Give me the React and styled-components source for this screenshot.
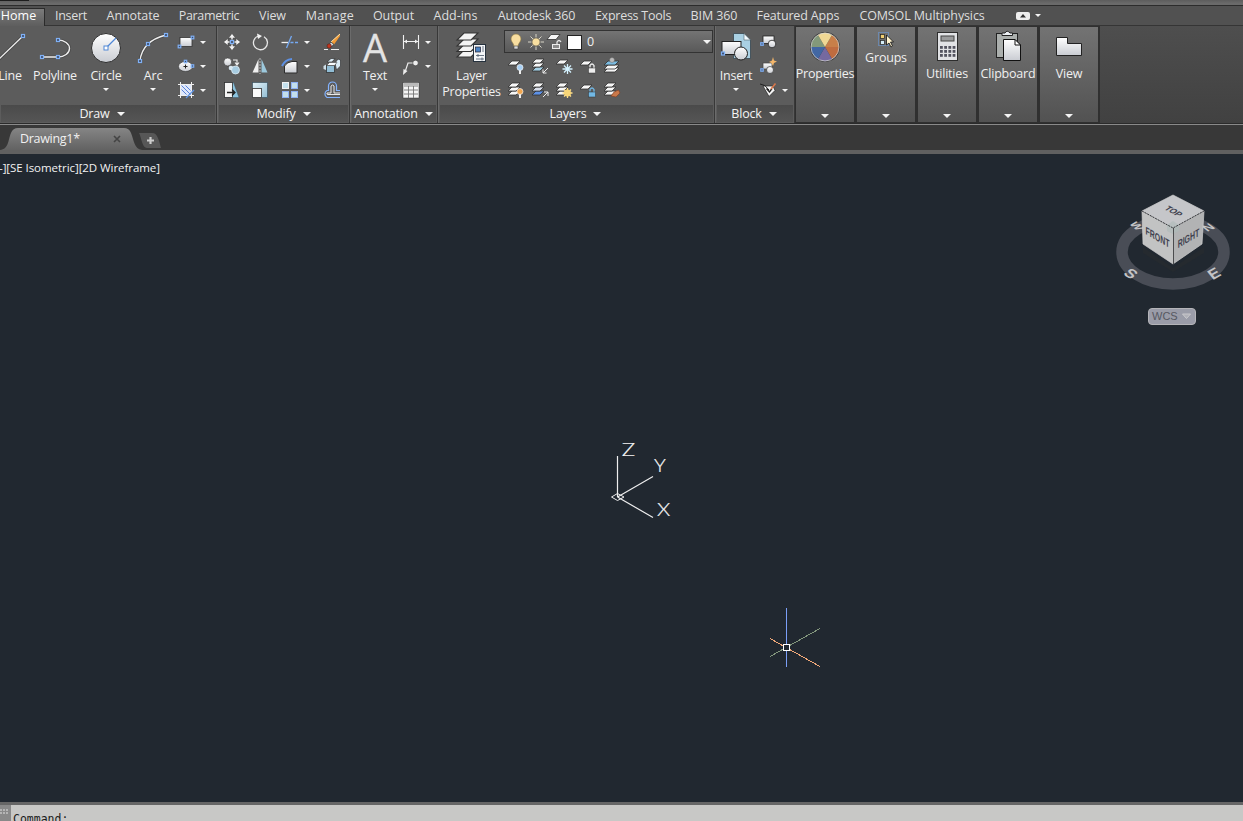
import React from "react";
import styled, { createGlobalStyle, css } from "styled-components";

const Global = createGlobalStyle`
  html, body { margin: 0; padding: 0; overflow: hidden; background: #212830; }
  * { box-sizing: border-box; }
`;

const Window = styled.div`
  width: 1243px;
  height: 821px;
  overflow: hidden;
  display: flex;
  flex-direction: column;
  background: #212830;
  color: #f0f0f0;
  font: 12.5px/16px "Open Sans", "Noto Sans", sans-serif;
  white-space: nowrap;
`;

const TitleStrip = styled.div`
  height: 6px;
  flex: none;
  background: linear-gradient(#5d5d5d, #6a6a6a 70%);
  border-bottom: 1px solid #2c2c2c;
  &::before { content: ""; display: block; width: 29px; height: 1px; background: #1d1d1d; }
`;

const TabBar = styled.nav`
  height: 20px;
  flex: none;
  display: flex;
  background: #515151;
  border-bottom: 1px solid #353535;
`;

const Tab = styled.div`
  width: ${(p) => p.$w}px;
  height: ${(p) => (p.$active ? 18 : 19)}px;
  margin-top: ${(p) => (p.$active ? 2 : 0)}px;
  padding-top: ${(p) => (p.$active ? 0 : 2)}px;
  display: flex;
  justify-content: center;
  color: #dedede;
  letter-spacing: ${(p) => p.$ls || 0}px;
  ${(p) => p.$active && css`
    background: linear-gradient(#7b7b7b, #5e5e5e);
    border-top: 1px solid #2b2b2b;
    border-right: 1px solid #2b2b2b;
    padding-right: 7px;
    color: #fff;
    line-height: 14px;
  `}
`;

const TabTools = styled.div`
  display: flex;
  align-items: center;
  gap: 5px;
  padding-left: 21px;
`;

const Ribbon = styled.div`
  height: 98px;
  flex: none;
  display: flex;
  background: linear-gradient(#4e4e4e, #414141);
  border-bottom: 1px solid #2b2b2b;
`;

const Panel = styled.section`
  width: ${(p) => p.$w}px;
  flex: none;
  display: flex;
  flex-direction: column;
  background: #5c5c5c;
  border-left: ${(p) => (p.$first ? 0 : 1)}px solid #6b6b6b;
  border-right: 1px solid #383838;
`;

const PanelBody = styled.div`
  height: 79px;
  display: flex;
`;

const PanelTitle = styled.div`
  height: 17px;
  margin: 0 1px;
  display: flex;
  align-items: center;
  justify-content: center;
  gap: 7px;
  padding-right: ${(p) => p.$shift || 0}px;
  background: linear-gradient(#4a4a4a, #555);
  color: #f4f4f4;
  letter-spacing: -0.15px;
`;

const Arrow = styled.i`
  flex: none;
  width: 0;
  height: 0;
  border: ${(p) => (p.$s || 3)}px solid transparent;
  border-top: ${(p) => (p.$s || 3)}px solid #f4f4f4;
  border-bottom: 0;
`;

const BigButton = styled.div`
  width: ${(p) => p.$w}px;
  margin-left: ${(p) => p.$ml || 0}px;
  flex: none;
  display: flex;
  flex-direction: column;
  align-items: center;
  padding-top: 5px;
  letter-spacing: -0.2px;
  svg { flex: none; margin-bottom: 3px; }
  i { margin-top: 4px; }
`;

const SmallColumn = styled.div`
  display: flex;
  flex-direction: column;
  padding-top: 4px;
  margin-left: ${(p) => p.$ml || 0}px;
`;

const SmallRow = styled.div`
  height: 24px;
  display: flex;
  align-items: center;
  gap: 5px;
`;

const ModifyGrid = styled.div`
  display: grid;
  grid-template-columns: 28px 30px 42px 18px;
  grid-auto-rows: 24px;
  align-items: center;
  padding: 4px 0 0 5px;
`;

const LayerTools = styled.div`
  display: flex;
  flex-direction: column;
  padding-top: 4px;
`;

const LayerSelect = styled.div`
  width: 209px;
  height: 23px;
  display: flex;
  align-items: center;
  padding: 0 1px 0 2px;
  border: 1px solid #333;
  background: linear-gradient(#747474, #595959);
  i { margin-left: auto; }
`;

const LayerGrid = styled.div`
  display: grid;
  grid-template-columns: repeat(5, 24px);
  grid-auto-rows: 24px;
  align-items: center;
  padding: 1px 0 0 3px;
`;

const Swatch = styled.b`
  width: 15px;
  height: 15px;
  margin: 1px 5px 0 4px;
  background: #fff;
  border: 1px solid #222;
`;

const Collapsed = styled.section`
  width: 61px;
  flex: none;
  height: 97px;
  display: flex;
  flex-direction: column;
  align-items: center;
  padding-top: 3px;
  padding-bottom: 4px;
  background: linear-gradient(#737373, #525252);
  border: 1px solid #303030;
  border-right-width: 2px;
  letter-spacing: -0.2px;
  svg { flex: none; margin-bottom: 2px; }
  i { margin-top: auto; }
`;

const FileTabs = styled.div`
  height: 30px;
  flex: none;
  display: flex;
  align-items: flex-start;
  background: #383838;
  border-top: 1px solid #8a8a8a;
  border-bottom: 4px solid #606060;
`;

const FileTab = styled.div`
  width: 142px;
  height: 22px;
  margin-top: 3px;
  padding: 0 21px 1px 20px;
  display: flex;
  align-items: center;
  justify-content: space-between;
  letter-spacing: -0.3px;
  background: linear-gradient(#858585, #626262);
  clip-path: path("M0 22 C9 21 8 12 11 5 Q13 0 18 0 H124 Q129 0 131 5 C134 12 134 21 142 22 Z");
`;

const NewTab = styled.div`
  width: 22px;
  height: 15px;
  margin: 8px 0 0 -3px;
  display: flex;
  align-items: center;
  justify-content: center;
  background: #575757;
  clip-path: path("M0 0 H13 C19 0 20 8 22 15 H8 C3 15 3 6 0 0 Z");
`;

const Canvas = styled.main`
  height: 648px;
  flex: none;
  position: relative;
  background: #212830;
`;

const ViewLabel = styled.div`
  padding-top: 6px;
  margin-left: -1px;
  font-size: 11.5px;
  font-weight: 500;
  color: #f2f2f2;
  letter-spacing: -0.06px;
`;

const Placed = styled.svg`
  position: absolute;
  left: ${(p) => p.$x}px;
  top: ${(p) => p.$y}px;
`;

const Wcs = styled.div`
  position: absolute;
  left: 1148px;
  top: 154px;
  width: 48px;
  height: 17px;
  display: flex;
  align-items: center;
  justify-content: space-between;
  padding: 0 4px 0 3px;
  border: 1px solid #b4b4b8;
  border-radius: 4px;
  background: #9a9ca8;
  color: #565861;
  font: 11px/15px "Liberation Sans", sans-serif;
`;

const CommandBar = styled.footer`
  height: 19px;
  flex: none;
  display: flex;
  background: #c8c8c6;
  border-top: 3px solid #666;
  color: #1c1c1c;
  font: 11.5px/16px "DejaVu Sans Mono", monospace;
  overflow: hidden;
`;

const Grip = styled.div`
  width: 11px;
  margin-right: 2px;
  background: #898989;
`;

const CommandText = styled.div`
  padding-top: 6px;
`;

/* ---------- icons ---------- */

const Small = ({ children }) => <svg width="18" height="18" viewBox="0 0 18 18" fill="none">{children}</svg>;
const Big = ({ children }) => <svg width="34" height="34" viewBox="0 0 34 34" fill="none">{children}</svg>;

const Node = ({ x, y, s = 3 }) => (
  <rect x={x - s / 2} y={y - s / 2} width={s} height={s} fill="#3d4b66" stroke="#7fb0f5" strokeWidth="1.2" />
);

const HiddenDefs = styled.svg`
  position: absolute;
`;

const Defs = () => (
  <HiddenDefs width="0" height="0">
    <defs>
      <linearGradient id="silver" x1="0" y1="0" x2="0" y2="1"><stop offset="0" stopColor="#fff" /><stop offset="1" stopColor="#c9ccd2" /></linearGradient>
      <linearGradient id="ice" x1="0" y1="0" x2="1" y2="1"><stop offset="0" stopColor="#e3f2f8" /><stop offset="1" stopColor="#93bdd3" /></linearGradient>
    </defs>
  </HiddenDefs>
);

const LineIcon = () => <Big><path d="M4 30 30 5" stroke="#222" strokeWidth="3" opacity=".35" /><path d="M4 30 30 5" stroke="#eee" strokeWidth="1.3" /><Node x={30} y={5} /></Big>;
const PolylineIcon = () => <Big><path d="M4 26H20A11.5 8.5 0 0 0 20 9" stroke="#222" strokeWidth="3" opacity=".3" /><path d="M4 26H20A11.5 8.5 0 0 0 20 9" stroke="#eee" strokeWidth="1.4" /><Node x={4} y={26} /><Node x={20} y={26} /><Node x={20} y={9} /></Big>;
const CircleIcon = () => <Big><circle cx="17" cy="17" r="14.5" fill="url(#silver)" stroke="#2e2e2e" /><path d="M17 17 27 7" stroke="#4f87d6" strokeWidth="1.2" /><rect x="15" y="15" width="4" height="4" fill="#fff" stroke="#4f87d6" /></Big>;
const ArcIcon = () => <Big><path d="M4 30Q6 10 30 4" stroke="#222" strokeWidth="3" opacity=".3" /><path d="M4 30Q6 10 30 4" stroke="#eee" strokeWidth="1.3" /><Node x={4} y={30} /><Node x={12} y={13} /><Node x={30} y={4} /></Big>;
const RectIcon = () => <Small><rect x="3" y="4.5" width="12" height="9" fill="url(#silver)" stroke="#333" strokeWidth=".8" /><Node x={15.5} y={4.5} s={2.6} /><Node x={2.5} y={13.5} s={2.6} /></Small>;
const EllipseIcon = () => <Small><ellipse cx="8.5" cy="9.5" rx="7" ry="5" fill="url(#silver)" stroke="#333" strokeWidth=".6" /><path d="M6.5 9.5h4M8.5 7.5v4" stroke="#222" /><Node x={8.5} y={4.5} s={2.4} /><Node x={15.5} y={9} s={2.4} /></Small>;
const HatchIcon = () => <Small><rect x="4" y="4" width="10" height="10" fill="#dfe8fb" /><path d="M4.500 8.500 9.500 13.500M4.500 4.500 13.500 13.500M8.500 4.500 13.500 9.500" stroke="#5c83d8" /><path d="M3.500 1V17M14.500 1V17M1 3.500H17M1 14.500H17" stroke="#f0f0f0" /><path d="M9 17 17 9" stroke="#5f95e8" strokeWidth="1.2" /></Small>;

const MoveIcon = () => <Small><path d="M9 .5 12.500 5H5.500ZM9 17.500 5.500 13H12.500ZM.5 9 5 5.500V12.500ZM17.500 9 13 12.500V5.500Z" fill="#f2f2f2" stroke="#3c3c3c" strokeWidth=".5" /><path d="M9 4V6.500M9 11.500V14M4 9H6.500M11.500 9H14" stroke="#eee" strokeWidth="1.5" /><Node x={9} y={9} /></Small>;
const RotateIcon = () => <Small><path d="M7.500 3A7 7 0 1 0 13 3.700" stroke="#e8e8e8" strokeWidth="1.300" /><path d="M6 .5 11 3 7 6Z" fill="#f2f2f2" /></Small>;
const TrimIcon = () => <Small><path d="M.5 9.500H7" stroke="#f0f0f0" strokeWidth="1.3" /><path d="M9.500 9.500h3M14 9.500h3" stroke="#75a9f2" strokeWidth="1.3" /><path d="M5.500 15 10.500 3" stroke="#75a9f2" strokeWidth="1.3" /></Small>;
const EraseIcon = () => <Small><path d="M16.5 1 8 9 11 11.5 17 3Z" fill="#f29a35" /><path d="M17 1 8 9" stroke="#ffe1a5" /><path d="M8 9 11 11.5 8 14 5.5 12Z" fill="#d8d8d8" stroke="#333" strokeWidth=".7" /><circle cx="6.2" cy="13" r="2.2" fill="#c3361f" stroke="#402018" strokeWidth=".5" /><path d="M1 16.5H5M8 16.5H16" stroke="#eee" /></Small>;
const CopyIcon = () => <Small><circle cx="4.7" cy="5" r="4" fill="url(#silver)" stroke="#333" strokeWidth=".6" /><circle cx="8" cy="11" r="2.3" fill="#d8e7f0" /><circle cx="12.5" cy="13" r="4" fill="#a6cbe0" stroke="#eaf5fb" strokeWidth=".7" /><path d="M10 3H14V7M12 5.5 14 8 16 5.5" stroke="#f0f0f0" strokeWidth="1.1" /></Small>;
const MirrorIcon = () => <Small><path d="M7.500 2V15.500H1.500Z" fill="#f0f0f0" /><path d="M10.500 2V15.500H16.500Z" fill="#9cc8dc" /><path d="M9 1V17" stroke="#bcbcbc" strokeDasharray="2 1" /></Small>;
const FilletIcon = () => <Small><path d="M3.5 16V9Q6 5 11 4.5H16V16Z" fill="url(#silver)" stroke="#2c2c2c" /><path d="M1 9Q4 2.5 11 2" stroke="#5d91e6" strokeWidth="2" /></Small>;
const ExplodeIcon = () => <Small><path d="M4 5 8 1.500H12L9 5ZM12 6 15 2 17.500 3V9L13.500 13Z" fill="#d9eaf4" stroke="#333" strokeWidth=".7" /><rect x="3.500" y="8.500" width="8" height="7" fill="#91bdd5" stroke="#333" strokeWidth=".8" /><path d="M3.500 8.500 6.500 5.500H14L11.500 8.500Z" fill="#f7fbfd" stroke="#333" strokeWidth=".5" /><path d="M.5 9 3 7.500V13L.5 12Z" fill="#cfdfe8" /></Small>;
const StretchIcon = () => <Small><path d="M2 1.500H10.500L16 16.500H2Z" fill="#8cc4df" stroke="#3b5361" strokeWidth=".5" /><rect x="1.500" y="1.500" width="8" height="15" fill="#f5f5f5" stroke="#2e2e2e" strokeWidth=".8" /><path d="M4 11.5H12M9 8.5 12 11.5 9 14.5" stroke="#222" strokeWidth="1.3" /></Small>;
const ScaleIcon = () => <Small><rect x="1.500" y="1.500" width="15" height="15" fill="url(#ice)" stroke="#3b5361" strokeWidth=".7" /><rect x="1.500" y="7.500" width="9" height="9" fill="#fafafa" stroke="#444" strokeWidth=".9" /></Small>;
const ArrayIcon = () => <Small>{[[1.5, 1.5, "#f0f0f0"], [10.5, 1.5, "#8fb2f5"], [1.5, 10.5, "#8fb2f5"], [10.5, 10.5, "#8fb2f5"]].map(([x, y, c]) => <rect key={`${x}${y}`} x={x} y={y} width="6" height="6" fill="#c3dfec" stroke={c} strokeWidth="1" />)}</Small>;
const OffsetIcon = () => <Small><path d="M17 16.500H4A4 4 0 0 1 4 9.500H5.500V5A4 4 0 0 1 13.500 5V9.500H17" stroke="#83b3ff" strokeWidth="1.2" /><path d="M17 13.500H5Q3.500 13.500 4 12H8V5Q9.500 3 11 5V12H17" stroke="#e8e8e8" /></Small>;

const TextIcon = () => <Big><text x="17" y="31" textAnchor="middle" fontFamily="Open Sans, sans-serif" fontSize="38" fill="#e4e4e4" stroke="#e4e4e4" strokeWidth=".3">A</text></Big>;
const DimIcon = () => <Small><path d="M1.5 2V16M16.5 2V16M2 8.500H16" stroke="#f0f0f0" strokeWidth="1.1" /><path d="M2 8.500 5 6.500V10.500ZM16 8.500 13 6.500V10.500Z" fill="#f0f0f0" /></Small>;
const LeaderIcon = () => <Small><path d="M3 15 6 6H12" stroke="#eee" strokeWidth="1.2" /><path d="M1 18 1.5 12 5.5 14Z" fill="#eee" /><circle cx="13.5" cy="6" r="2.8" fill="#eee" stroke="#333" strokeWidth=".6" /></Small>;
const TableIcon = () => <Small><rect x="1" y="1.500" width="16" height="15.500" fill="#f5f5f5" stroke="#333" strokeWidth=".5" /><path d="M2 3H16" stroke="#b9b9b9" strokeWidth="2" /><path d="M2 9H16M2 13H16M6.5 5V17M11.5 5V17M2 5H16" stroke="#777" strokeWidth=".9" /></Small>;

const Sheet = ({ x, y, w = 12, h = 4, fill = "#f6f6f6" }) => <path d={`M${x + 4} ${y}H${x + w}L${x + w - 4} ${y + h}H${x}Z`} fill={fill} stroke="#303030" strokeWidth=".8" />;

const LayerPropsIcon = () => (
  <Big>
    {[20, 14.5, 9, 3].map((y) => <path key={y} d={`M9 ${y - 1}H23L16 ${y + 6}H2Z`} fill="#f4f4f4" stroke="#333" strokeWidth="1.1" />)}
    <rect x="18.5" y="13.5" width="12" height="17" fill="#f4f6f8" stroke="#26323e" /><rect x="20.5" y="16" width="5" height="5" fill="#4b83c4" stroke="#223" strokeWidth=".7" /><path d="M27 16h2M27 18h2M27 20h2M21 24.5h8M21 28h8M23 23v3M27 26.5v3" stroke="#475767" strokeWidth=".8" />
  </Big>
);
const Bulb = ({ color = "#a8d0f5" }) => <g><path d="M13 12V17" stroke="#eee" strokeWidth="2" /><circle cx="13" cy="10.5" r="3" fill={color} stroke="#f4f4f4" strokeWidth=".7" /></g>;
const Lock = ({ color = "#eee" }) => <g><path d="M11 10.5V8.5Q13 5.5 15 8.5V11" stroke={color} strokeWidth="1.3" /><rect x="9.5" y="11" width="7" height="5" fill={color} stroke="#333" strokeWidth=".5" /></g>;
const Stack = ({ colors = ["#f7f7f7", "#f7f7f7", "#f7f7f7"] }) => <>{[2, 1, 0].map((i) => <Sheet key={i} x={1} y={2 + i * 4} fill={colors[i]} />)}</>;
const Starry = ({ color }) => <path d="M12.5 7V17M7.5 12H17.5M9 8.5 16 15.5M16 8.5 9 15.5" stroke={color} strokeWidth="1.3" />;

const layerIcons = [
  <Small><Sheet x={1} y={4} /><Bulb /></Small>,
  <Small><Stack colors={["#f7f7f7", "#f7f7f7", "#a3cfe4"]} /><path d="M17 11 12 16M12 12.5V16H15.5" stroke="#eee" /></Small>,
  <Small><Sheet x={1} y={3} /><circle cx="12.5" cy="12" r="2" fill="#3f7694" /><Starry color="#d4f2ff" /></Small>,
  <Small><Sheet x={1} y={4} /><Lock /></Small>,
  <Small><Sheet x={1} y={11} w={15} /><Sheet x={1} y={8} w={15} /><Sheet x={1} y={4} w={15} fill="#7bbbe0" /><circle cx="9" cy="3" r="2.5" fill="#bbb" stroke="#555" strokeWidth=".4" /></Small>,
  <Small><Stack /><Bulb color="#f1a64f" /></Small>,
  <Small><Stack colors={["#f7f7f7", "#d8dde9", "#5d91e6"]} /><path d="M12 16 17 11M13 11H17V15" stroke="#eee" /></Small>,
  <Small><Stack /><Starry color="#ffe08a" /><circle cx="12.5" cy="12" r="3.5" fill="#f8d678" /></Small>,
  <Small><Sheet x={1} y={4} /><Lock color="#72b8e4" /></Small>,
  <Small><Stack /><path d="M15.5 9 17 12 13 16 8 15 11 11Z" fill="#c9784a" stroke="#7f3d20" strokeWidth=".6" /></Small>,
];

const BulbOn = () => <svg width="18" height="20" viewBox="0 0 18 20"><path d="M9 2a5 5 0 0 0-5 5c0 3 3 4 3 8h4c0-4 3-5 3-8a5 5 0 0 0-5-5Z" fill="#f8dea0" stroke="#8c7742" strokeWidth=".6" /><path d="M7 14h4v3H7z" fill="#d9d9d9" stroke="#444" strokeWidth=".6" /></svg>;
const Sun = () => <svg width="21" height="20" viewBox="0 0 21 20"><path d="M11 2V18M3 10H19M5.5 4.5 16.5 15.5M16.5 4.5 5.5 15.5" stroke="#d8d5c8" strokeWidth="1" strokeDasharray="3.500 9 3.500" /><circle cx="11" cy="10" r="4" fill="#f8dfa0" stroke="#77705c" strokeWidth=".7" /></svg>;
const Unlocked = () => <svg width="17" height="20" viewBox="0 0 17 20" fill="none"><Sheet x={1} y={2.5} w={13} h={5} /><path d="M11 13V10Q13 7 15 10" stroke="#e6e6e6" strokeWidth="1.3" /><rect x="6.5" y="12.5" width="7" height="4" fill="#8d8d8d" stroke="#eee" /></svg>;

const InsertIcon = () => (
  <Big>
    <path d="M14.5 2.5H25L31.5 9V27.5H14.5Z" fill="#a9d0e3" stroke="#36444c" strokeWidth=".8" /><path d="M25 2.5V9H31.5Z" fill="#f3fbff" stroke="#50616a" strokeWidth=".6" />
    <rect x="3" y="10.500" width="19" height="13" fill="url(#silver)" stroke="#222" /><circle cx="22" cy="22.500" r="6.500" fill="url(#silver)" stroke="#222" /><Node x={4} y={22.500} />
  </Big>
);
const CreateBlock = () => <Small><rect x="4" y="3" width="11" height="7.500" fill="url(#silver)" stroke="#222" strokeWidth=".8" /><circle cx="13" cy="11" r="3.800" fill="url(#silver)" stroke="#222" strokeWidth=".8" /><Node x={3} y={11} s={2.5} /></Small>;
const EditBlock = () => <Small><rect x="4" y="6" width="9" height="6" fill="url(#silver)" stroke="#444" strokeWidth=".7" /><circle cx="11" cy="13" r="3.500" fill="url(#silver)" stroke="#333" strokeWidth=".7" /><Node x={3} y={13} s={2.4} /><path d="M14 0 15 3.500 18 4.500 15 6 14 9 12.500 6 10 5 13 3.500Z" fill="#f4b66a" /></Small>;
const AttrIcon = () => <Small><path d="M4 5 10 15.500 16 9.500 14 5H7Z" fill="#f5f5f5" stroke="#222" strokeWidth=".7" /><path d="M1 3Q6 3 10 9" stroke="#222" /><path d="M7.500 7.500 10.500 11 13 7.500" stroke="#222" strokeWidth="1.300" /><path d="M12 8 16.500 2.500" stroke="#d9774a" strokeWidth="1.600" /></Small>;

const PropertiesIcon = () => {
  const colors = ["#c87f49", "#bf6c40", "#75699f", "#4267a3", "#83997a", "#efd794"];
  const pt = (a) => `${17 + 14 * Math.sin((a * Math.PI) / 180)} ${17 - 14 * Math.cos((a * Math.PI) / 180)}`;
  return <Big><circle cx="17" cy="17" r="15" fill="#3b3b3b" />{colors.map((c, i) => <path key={c} d={`M17 17L${pt(30 + i * 60)}A14 14 0 0 1 ${pt(90 + i * 60)}Z`} fill={c} />)}<circle cx="17" cy="17" r="14" stroke="#ddd" strokeWidth=".7" /></Big>;
};
const GroupsIcon = () => <Small><rect x="1.500" y="2.500" width="10" height="13" stroke="#6ba2ec" strokeDasharray="1 1" /><rect x="3.500" y="4.500" width="4" height="4" fill="#efce72" stroke="#222" strokeWidth=".7" /><rect x="3.500" y="10.500" width="4" height="4" fill="#d5edf7" stroke="#222" strokeWidth=".7" /><path d="M9.500 5V15L12 13 14 17 15.500 16 13.500 12H16.500Z" fill="#fff4d0" stroke="#111" strokeWidth=".8" /></Small>;
const CalcIcon = () => (
  <Big>
    <rect x="7.500" y="2.500" width="20" height="28" fill="#e1e2e5" stroke="#2d2d2d" /><rect x="11" y="6" width="13" height="5" fill="#9a9b9c" stroke="#444" />
    {[0, 1, 2].map((r) => [0, 1, 2, 3].map((c) => <rect key={`${r}-${c}`} x={10 + c * 4.200} y={16 + r * 4} width="2.800" height="2.800" fill="#53535f" />))}
  </Big>
);
const ClipboardIcon = () => <Big><rect x="5.500" y="3.500" width="21" height="24" fill="#abafad" stroke="#222" /><path d="M11 5.500V3H14Q16-.5 19 3H21.500V5.500Z" fill="#eef1f5" stroke="#222" /><path d="M12.500 9.500H24L29.500 15V30.500H12.500Z" fill="url(#silver)" stroke="#111" /><path d="M24 9.500V15H29.500Z" fill="#fff" stroke="#111" /></Big>;
const ViewIcon = () => <Big><path d="M4.500 7.500H15.500V13.500H29.500V25.500H4.500Z" fill="url(#silver)" stroke="#222" /></Big>;

const ViewCube = () => (
  <Placed $x={1108} $y={34} width="130" height="110" viewBox="1108 188 130 110" fill="none">
    <ellipse cx="1173" cy="252" rx="51" ry="32" stroke="#494d56" strokeWidth="11.500" />
    <path d="M1143 247 1173 268 1204 247V253L1173 272 1143 253Z" fill="#252a2f" />
    <g fontFamily="Liberation Sans, sans-serif" fontWeight="bold" fontSize="16" fill="#c4c4c6" textAnchor="middle">
      <text y="5.500" transform="matrix(.62 .5 -.75 .25 1137 226)" fontSize="15">W</text>
      <text y="5.500" transform="matrix(.8 -.35 .65 .5 1208 227)" fontSize="15">N</text>
      <text y="5.500" transform="matrix(.85 .5 -.7 .6 1131 273.500)">S</text>
      <text y="5.500" transform="matrix(.87 -.5 .6 .75 1214 273.500)">E</text>
    </g>
    <path d="M1142 211 1173 228V264L1143 244Z" fill="#c2c3c3" />
    <path d="M1173 228 1204 211 1202 244 1173 264Z" fill="#b2b3b4" />
    <path d="M1173 195 1204 211 1173 228 1142 211Z" fill="#c5c6c9" />
    <path d="M1173 195 1204 211 1202 244 1173 264 1143 244 1142 211Z" stroke="#cfcfcf" strokeWidth=".7" />
    <path d="M1167 225 1173 221 1179 225V231L1173 234 1167 231Z" fill="#aebbb9" opacity=".6" />
    <path d="M1142 211 1173 228 1204 211" stroke="#3c3d40" strokeDasharray="2 1" />
    <path d="M1173.500 228V264" stroke="#4b4c4e" />
    <g fontFamily="Liberation Sans, sans-serif" fontWeight="bold" fill="#41424f" textAnchor="middle">
      <text fontSize="10" transform="matrix(.72 .4 -.75 .5 1171 213)">TOP</text>
      <text fontSize="10" transform="matrix(.7 .4 0 1.100 1157.500 241)">FRONT</text>
      <text fontSize="10" transform="matrix(.7 -.4 0 1.100 1188.500 242)">RIGHT</text>
    </g>
  </Placed>
);

const UcsIcon = () => (
  <Placed $x={605} $y={281} width="75" height="90" viewBox="605 435 75 90" fill="none">
    <path d="M617.500 456V497M617.500 497 653 476.500M617.500 497 653 517.500" stroke="#eee" strokeWidth="1.200" />
    <path d="M611.500 497 617.500 493.500 624 497 617.500 500.500Z" stroke="#eee" />
    <g fontFamily="Lato, sans-serif" fontWeight="300" fontSize="18" fill="#f6f6f6" stroke="#f6f6f6" strokeWidth=".2" textAnchor="middle">
      <text transform="translate(628.500 455.500) scale(1.25 1)">Z</text>
      <text transform="translate(660 472) scale(1.1 1)">Y</text>
      <text transform="translate(663.500 516) scale(1.18 1)">X</text>
    </g>
  </Placed>
);

const Crosshair = () => (
  <Placed $x={765} $y={449} width="60" height="70" viewBox="765 603 60 70" fill="none" shapeRendering="crispEdges">
    <path d="M770 656.500 820 628.500" stroke="#83977d" /><path d="M770 638.500 820 666.500" stroke="#f0a878" /><path d="M786.500 608V667" stroke="#7b9ff7" />
    <rect x="783.500" y="644.500" width="6" height="6" fill="#212830" stroke="#fff" />
  </Placed>
);

const tabs = [["Insert", 52, -0.3], ["Annotate", 72, -0.1], ["Parametric", 80, -0.35], ["View", 47, -0.1], ["Manage", 68, 0.3], ["Output", 59, -0.1], ["Add-ins", 65], ["Autodesk 360", 97, -0.15], ["Express Tools", 96, -0.25], ["BIM 360", 66, -0.1], ["Featured Apps", 102, -0.15], ["COMSOL Multiphysics", 146, -0.12]];

const Drop = ({ icon }) => <SmallRow>{icon}<Arrow /></SmallRow>;

export default function App() {
  return (
    <Window>
      <Global />
      <Defs />
      <TitleStrip />
      <TabBar>
        <Tab $w={45} $active>Home</Tab>
        {tabs.map(([name, w, ls]) => <Tab key={name} $w={w} $ls={ls}>{name}</Tab>)}
        <TabTools>
          <svg width="14" height="8" viewBox="0 0 14 8"><rect width="14" height="8" rx="2" fill="#eee" /><path d="M7 2 10 5.500H4Z" fill="#333" /></svg>
          <Arrow />
        </TabTools>
      </TabBar>
      <Ribbon>
        <Panel $w={217} $first>
          <PanelBody>
            <BigButton $w={40} $ml={-10}><LineIcon />Line</BigButton>
            <BigButton $w={50}><PolylineIcon />Polyline</BigButton>
            <BigButton $w={52}><CircleIcon />Circle<Arrow /></BigButton>
            <BigButton $w={42}><ArcIcon />Arc<Arrow /></BigButton>
            <SmallColumn $ml={3}>
              <Drop icon={<RectIcon />} /><Drop icon={<EllipseIcon />} /><Drop icon={<HatchIcon />} />
            </SmallColumn>
          </PanelBody>
          <PanelTitle $shift={12}>Draw<Arrow $s={4} /></PanelTitle>
        </Panel>
        <Panel $w={133}>
          <PanelBody>
            <ModifyGrid>
              <MoveIcon /><RotateIcon /><Drop icon={<TrimIcon />} /><EraseIcon />
              <CopyIcon /><MirrorIcon /><Drop icon={<FilletIcon />} /><ExplodeIcon />
              <StretchIcon /><ScaleIcon /><Drop icon={<ArrayIcon />} /><OffsetIcon />
            </ModifyGrid>
          </PanelBody>
          <PanelTitle>Modify<Arrow $s={4} /></PanelTitle>
        </Panel>
        <Panel $w={88}>
          <PanelBody>
            <BigButton $w={48}><TextIcon />Text<Arrow /></BigButton>
            <SmallColumn $ml={3}>
              <Drop icon={<DimIcon />} /><Drop icon={<LeaderIcon />} /><SmallRow><TableIcon /></SmallRow>
            </SmallColumn>
          </PanelBody>
          <PanelTitle $shift={1}>Annotation<Arrow $s={4} /></PanelTitle>
        </Panel>
        <Panel $w={277}>
          <PanelBody>
            <BigButton $w={65}><LayerPropsIcon />Layer<span>Properties</span></BigButton>
            <LayerTools>
              <LayerSelect><BulbOn /><Sun /><Unlocked /><Swatch />0<Arrow $s={4} /></LayerSelect>
              <LayerGrid>{layerIcons.map((icon, i) => <React.Fragment key={i}>{icon}</React.Fragment>)}</LayerGrid>
            </LayerTools>
          </PanelBody>
          <PanelTitle $shift={2}>Layers<Arrow $s={4} /></PanelTitle>
        </Panel>
        <Panel $w={80}>
          <PanelBody>
            <BigButton $w={40}><InsertIcon />Insert<Arrow /></BigButton>
            <SmallColumn $ml={3}>
              <SmallRow><CreateBlock /></SmallRow><SmallRow><EditBlock /></SmallRow><Drop icon={<AttrIcon />} />
            </SmallColumn>
          </PanelBody>
          <PanelTitle $shift={2}>Block<Arrow $s={4} /></PanelTitle>
        </Panel>
        <Collapsed><PropertiesIcon />Properties<Arrow $s={4} /></Collapsed>
        <Collapsed><GroupsIcon />Groups<Arrow $s={4} /></Collapsed>
        <Collapsed><CalcIcon />Utilities<Arrow $s={4} /></Collapsed>
        <Collapsed><ClipboardIcon />Clipboard<Arrow $s={4} /></Collapsed>
        <Collapsed><ViewIcon />View<Arrow $s={4} /></Collapsed>
      </Ribbon>
      <FileTabs>
        <FileTab>Drawing1*<svg width="8" height="8" viewBox="0 0 8 8"><path d="M1 1 7 7M7 1 1 7" stroke="#444" strokeWidth="1.600" /></svg></FileTab>
        <NewTab><svg width="7" height="7" viewBox="0 0 8 8"><path d="M4 0V8M0 4H8" stroke="#ccc" strokeWidth="2.500" /></svg></NewTab>
      </FileTabs>
      <Canvas>
        <ViewLabel>-][SE Isometric][2D Wireframe]</ViewLabel>
        <ViewCube />
        <Wcs>WCS<svg width="9" height="7" viewBox="0 0 9 7"><path d="M.5 1H8.500L4.500 5.500Z" fill="#b0b1b8" stroke="#c8c8cc" /></svg></Wcs>
        <UcsIcon />
        <Crosshair />
      </Canvas>
      <CommandBar>
        <Grip><svg width="11" height="16" viewBox="0 0 11 16">{[0, 1, 2].map((c) => [0, 1].map((r) => <rect key={`${c}${r}`} x={c * 3} y={4 + r * 3} width="2" height="2" fill="#b5b5b5" />))}</svg></Grip>
        <CommandText>Command:</CommandText>
      </CommandBar>
    </Window>
  );
}
